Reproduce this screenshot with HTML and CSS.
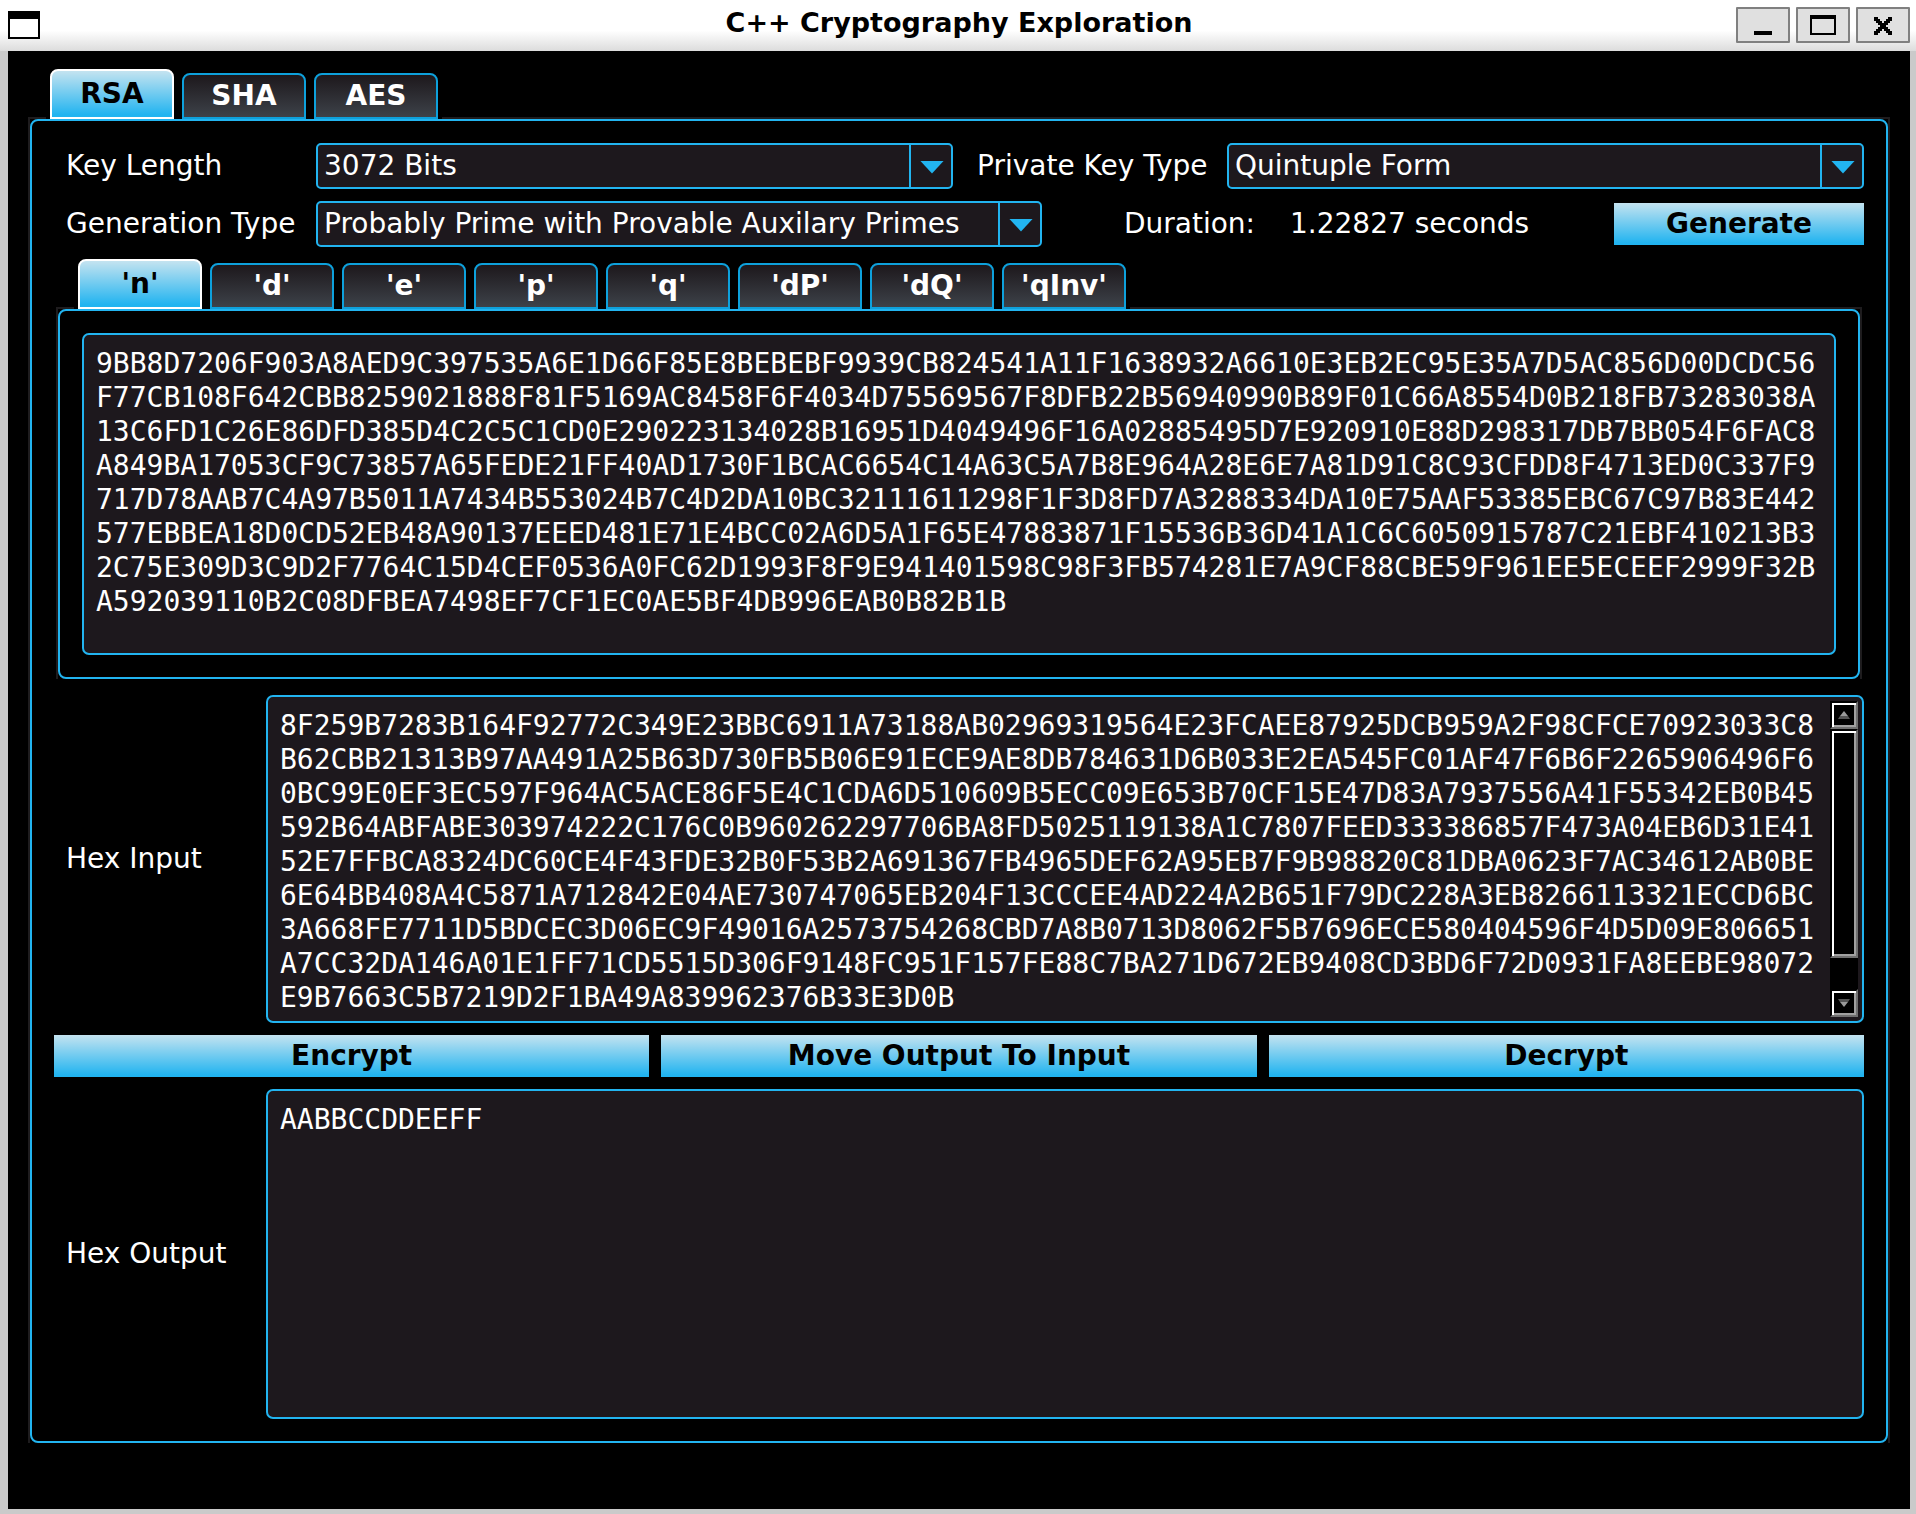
FILE: index.html
```
<!DOCTYPE html>
<html lang="en">
<head>
<meta charset="utf-8">
<title>C++ Cryptography Exploration</title>
<link rel="stylesheet" href="styles.css">
</head>
<body>
<header class="titlebar">
  <svg class="app-icon" width="32" height="28" viewBox="0 0 32 28" aria-hidden="true"><path d="M0 0h32v28H0z"/><path fill="#fff" d="M2 8h28v18H2z"/></svg>
  <h1 class="title">C++ Cryptography Exploration</h1>
  <div class="window-buttons">
    <button class="window-button" type="button" aria-label="Minimize"><svg width="26" height="20" viewBox="0 0 26 20"><path d="M4 16h18v4H4z"/></svg></button>
    <button class="window-button" type="button" aria-label="Maximize"><svg width="26" height="20" viewBox="0 0 26 20"><path fill-rule="evenodd" d="M0 0h26v20H0zM2 4v14h22V4z"/></svg></button>
    <button class="window-button" type="button" aria-label="Close"><svg width="26" height="20" viewBox="0 0 26 20" shape-rendering="crispEdges"><path d="M4 2h4v2h2v2h2v2h2V6h2V4h2V2h4v4h-2v2h-2v2h-2v2h2v2h2v2h2v4h-4v-2h-2v-2h-2v-2h-2v2h-2v2H8v2H4v-4h2v-2h2v-2h2v-2H8V8H6V6H4z"/></svg></button>
  </div>
</header>
<main class="window-body">
  <div class="tabs" role="tablist" aria-label="Algorithm">
    <button class="tab tab-selected" type="button" role="tab" aria-selected="true">RSA</button>
    <button class="tab" type="button" role="tab" aria-selected="false">SHA</button>
    <button class="tab" type="button" role="tab" aria-selected="false">AES</button>
  </div>
  <div class="pane-frame">
    <section class="pane form">
      <div class="options-row">
        <label class="label" for="key-length">Key Length</label>
        <div class="combo"><select id="key-length"><option>3072 Bits</option></select><span class="combo-arrow"></span></div>
        <label class="label label-second" for="key-type">Private Key Type</label>
        <div class="combo"><select id="key-type"><option>Quintuple Form</option></select><span class="combo-arrow"></span></div>
      </div>
      <div class="generate-row">
        <label class="label" for="generation-type">Generation Type</label>
        <div class="combo"><select id="generation-type"><option>Probably Prime with Provable Auxilary Primes</option></select><span class="combo-arrow"></span></div>
        <span class="duration-label">Duration:</span>
        <span>1.22827 seconds</span>
        <button class="action" type="button">Generate</button>
      </div>
      <div class="key-parts">
        <div class="tabs" role="tablist" aria-label="Key part">
          <button class="tab tab-selected" type="button" role="tab" aria-selected="true">'n'</button>
          <button class="tab" type="button" role="tab" aria-selected="false">'d'</button>
          <button class="tab" type="button" role="tab" aria-selected="false">'e'</button>
          <button class="tab" type="button" role="tab" aria-selected="false">'p'</button>
          <button class="tab" type="button" role="tab" aria-selected="false">'q'</button>
          <button class="tab" type="button" role="tab" aria-selected="false">'dP'</button>
          <button class="tab" type="button" role="tab" aria-selected="false">'dQ'</button>
          <button class="tab" type="button" role="tab" aria-selected="false">'qInv'</button>
        </div>
        <div class="pane-frame">
          <div class="pane">
            <div class="text-box text-box-key">
              <textarea aria-label="n" readonly spellcheck="false">9BB8D7206F903A8AED9C397535A6E1D66F85E8BEBEBF9939CB824541A11F1638932A6610E3EB2EC95E35A7D5AC856D00DCDC56F77CB108F642CBB8259021888F81F5169AC8458F6F4034D75569567F8DFB22B56940990B89F01C66A8554D0B218FB73283038A13C6FD1C26E86DFD385D4C2C5C1CD0E290223134028B16951D4049496F16A02885495D7E920910E88D298317DB7BB054F6FAC8A849BA17053CF9C73857A65FEDE21FF40AD1730F1BCAC6654C14A63C5A7B8E964A28E6E7A81D91C8C93CFDD8F4713ED0C337F9717D78AAB7C4A97B5011A7434B553024B7C4D2DA10BC32111611298F1F3D8FD7A3288334DA10E75AAF53385EBC67C97B83E442577EBBEA18D0CD52EB48A90137EEED481E71E4BCC02A6D5A1F65E47883871F15536B36D41A1C6C6050915787C21EBF410213B32C75E309D3C9D2F7764C15D4CEF0536A0FC62D1993F8F9E941401598C98F3FB574281E7A9CF88CBE59F961EE5ECEEF2999F32BA592039110B2C08DFBEA7498EF7CF1EC0AE5BF4DB996EAB0B82B1B</textarea>
            </div>
          </div>
        </div>
      </div>
      <div class="data-row">
        <label class="label" for="hex-input">Hex Input</label>
        <div class="text-box text-box-data">
          <textarea id="hex-input" spellcheck="false">8F259B7283B164F92772C349E23BBC6911A73188AB02969319564E23FCAEE87925DCB959A2F98CFCE70923033C8B62CBB21313B97AA491A25B63D730FB5B06E91ECE9AE8DB784631D6B033E2EA545FC01AF47F6B6F2265906496F60BC99E0EF3EC597F964AC5ACE86F5E4C1CDA6D510609B5ECC09E653B70CF15E47D83A7937556A41F55342EB0B45592B64ABFABE303974222C176C0B960262297706BA8FD5025119138A1C7807FEED333386857F473A04EB6D31E4152E7FFBCA8324DC60CE4F43FDE32B0F53B2A691367FB4965DEF62A95EB7F9B98820C81DBA0623F7AC34612AB0BE6E64BB408A4C5871A712842E04AE730747065EB204F13CCCEE4AD224A2B651F79DC228A3EB8266113321ECCD6BC3A668FE7711D5BDCEC3D06EC9F49016A2573754268CBD7A8B0713D8062F5B7696ECE580404596F4D5D09E806651A7CC32DA146A01E1FF71CD5515D306F9148FC951F157FE88C7BA271D672EB9408CD3BD6F72D0931FA8EEBE98072E9B7663C5B7219D2F1BA49A839962376B33E3D0B</textarea>
          <div class="scrollbar">
            <button class="scroll-part scroll-step" type="button" aria-label="Scroll up"><svg width="12" height="8" viewBox="0 0 12 8"><path fill="#9a9a9a" d="M6 0l4 5H2z"/><path fill="#555" d="M2 5h8l2 3H0z"/></svg></button>
            <div class="scroll-track"><div class="scroll-part scroll-thumb"></div></div>
            <button class="scroll-part scroll-step" type="button" aria-label="Scroll down"><svg width="12" height="8" viewBox="0 0 12 8"><path fill="#555" d="M0 0h12l-2 3H2z"/><path fill="#9a9a9a" d="M2 3h8L6 8z"/></svg></button>
          </div>
        </div>
      </div>
      <div class="actions">
        <button class="action" type="button">Encrypt</button>
        <button class="action" type="button">Move Output To Input</button>
        <button class="action" type="button">Decrypt</button>
      </div>
      <div class="data-row">
        <label class="label" for="hex-output">Hex Output</label>
        <div class="text-box text-box-output">
          <textarea id="hex-output" readonly spellcheck="false">AABBCCDDEEFF</textarea>
        </div>
      </div>
    </section>
  </div>
</main>
</body>
</html>
```
FILE: styles.css
```
:root {
  --accent: #22b4f0;
  --field: #1d181d;
  --faint: #1e1c1e;
  --frame: #cacaca;
  --bright: linear-gradient(#c4e3f0, #22b4f0 95%);
}

* {
  box-sizing: border-box;
}

body {
  display: flex;
  flex-direction: column;
  min-height: 100vh;
  margin: 0;
  background: #000;
  color: #fff;
  font: 28px/34px "DejaVu Sans", sans-serif;
}

button,
select,
textarea {
  margin: 0;
  font: inherit;
  color: inherit;
}

/* Title bar */

.titlebar {
  display: grid;
  grid-template-columns: 1fr auto 1fr;
  align-items: center;
  height: 51px;
  padding: 0 6px 1px 8px;
  background: linear-gradient(#fff 60%, #dcdcdc);
  color: #000;
}

.app-icon {
  display: block;
}

.title {
  margin: 0;
  padding-bottom: 4px;
  font-size: 27px;
}

.window-buttons {
  display: flex;
  justify-content: flex-end;
  gap: 6px;
}

.window-button {
  display: grid;
  place-items: center;
  width: 54px;
  height: 36px;
  padding: 0;
  border: 2px solid #808080;
  border-radius: 1px;
  background: #e0e0e0;
}

.window-body {
  flex: 1;
  padding: 18px 20px 66px;
  border: solid var(--frame);
  border-width: 0 6px 5px 8px;
}

/* Tabs and panes */

.tabs {
  position: relative;
  display: flex;
  align-items: flex-end;
  gap: 8px;
  width: max-content;
  margin: 0 0 -2px 18px;
  padding: 0 4px;
  background: #000;
}

.tab {
  width: 124px;
  height: 46px;
  padding: 0;
  border: 2px solid #0ea1dc;
  border-radius: 8px 8px 0 0;
  background: linear-gradient(#1d181c, #3d4249);
  font-weight: bold;
}

.tab-selected {
  height: 50px;
  border-color: #fff;
  background: var(--bright);
  color: #000;
}

.pane-frame {
  border: solid var(--faint);
  border-width: 2px 2px 0;
}

.pane {
  padding: 22px;
  border: 2px solid var(--accent);
  border-radius: 8px;
}

.form {
  display: flex;
  flex-direction: column;
  gap: 12px;
}

.key-parts {
  margin: 0 2px 4px;
}

/* Option rows */

.options-row,
.generate-row,
.data-row {
  display: grid;
  align-items: center;
}

.options-row {
  grid-template-columns: 262px 1fr 274px 1fr;
}

.generate-row {
  grid-template-columns: 262px 1fr 248px 324px 250px;
}

.label {
  padding-left: 12px;
}

.label-second {
  padding-left: 24px;
}

.duration-label {
  padding-left: 82px;
}

.combo {
  display: grid;
  height: 46px;
}

.combo select {
  grid-area: 1 / 1;
  width: 100%;
  padding: 0 48px 0 6px;
  appearance: none;
  border: 2px solid var(--accent);
  border-radius: 5px;
  background: var(--field);
}

.combo-arrow {
  display: grid;
  grid-area: 1 / 1;
  place-items: center;
  justify-self: end;
  width: 44px;
  padding-top: 2px;
  border-left: 2px solid var(--accent);
  margin: 2px 0;
  pointer-events: none;
}

.combo-arrow::before {
  content: "";
  width: 24px;
  height: 13px;
  background: var(--accent);
  clip-path: polygon(0 0, 100% 0, 50% 100%);
}

/* Text boxes */

.text-box {
  display: flex;
  overflow: hidden;
  border: 2px solid var(--accent);
  border-radius: 7px;
  background: var(--field);
}

.text-box-key {
  height: 322px;
}

.text-box-data {
  height: 328px;
}

.text-box-output {
  height: 330px;
}

.text-box textarea {
  flex: 1;
  min-width: 0;
  padding: 12px 8px 0 12px;
  overflow: hidden;
  resize: none;
  border: 0;
  outline: 0;
  background: none;
  font-family: "DejaVu Sans Mono", monospace;
  word-break: break-all;
}

.data-row {
  grid-template-columns: 212px 1fr;
}

.scrollbar {
  display: flex;
  flex-direction: column;
  width: 28px;
  margin: 4px;
  background: #000;
}

.scroll-part {
  padding: 0;
  border: 2px solid;
  border-color: #000 #707070 #707070 #000;
  background: #000;
  box-shadow: inset 2px 2px #fff, inset -2px -2px #a0a0a0;
}

.scroll-step {
  display: grid;
  place-items: center;
  height: 28px;
}

.scroll-track {
  flex: 1;
}

.scroll-thumb {
  height: 88%;
}

/* Buttons */

.action {
  height: 42px;
  padding: 0;
  border: 0;
  background: var(--bright);
  color: #000;
  font-weight: bold;
}

.actions {
  display: grid;
  grid-template-columns: repeat(3, 1fr);
  gap: 12px;
}
```
